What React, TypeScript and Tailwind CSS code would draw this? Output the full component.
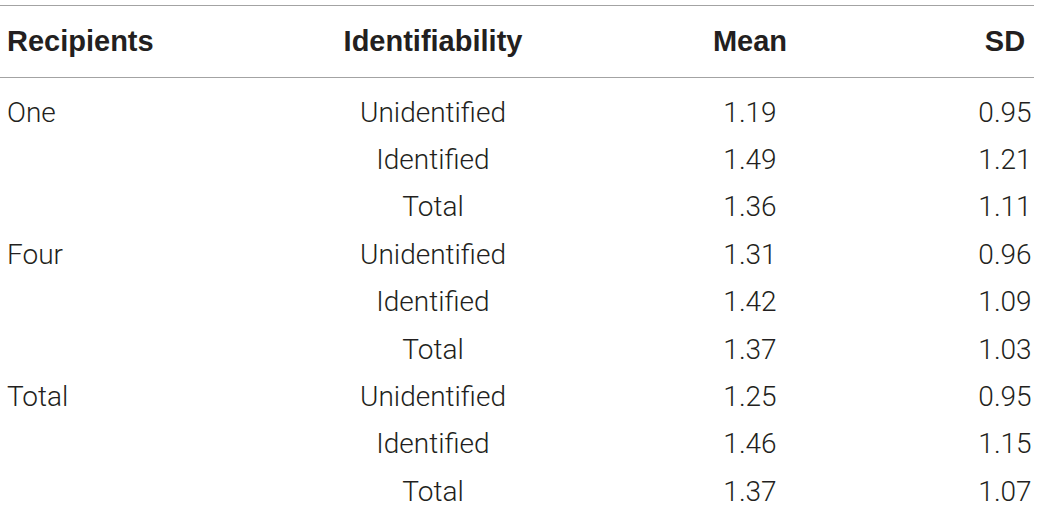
const ROWS = [
  { group: 'One', ident: 'Unidentified', mean: '1.19', sd: '0.95' },
  { group: '', ident: 'Identified', mean: '1.49', sd: '1.21' },
  { group: '', ident: 'Total', mean: '1.36', sd: '1.11' },
  { group: 'Four', ident: 'Unidentified', mean: '1.31', sd: '0.96' },
  { group: '', ident: 'Identified', mean: '1.42', sd: '1.09' },
  { group: '', ident: 'Total', mean: '1.37', sd: '1.03' },
  { group: 'Total', ident: 'Unidentified', mean: '1.25', sd: '0.95' },
  { group: '', ident: 'Identified', mean: '1.46', sd: '1.15' },
  { group: '', ident: 'Total', mean: '1.37', sd: '1.07' },
]

const COLS = 'grid grid-cols-[280px_306px_328px_120px]'

export default function App() {
  return (
    <div className="h-[507px] w-[1040px] overflow-hidden bg-white pt-[5px] text-[#231f20]">
      <div className="w-[1034px] border-t border-[#a3a3a3]">
        <div
          className={`${COLS} h-[72px] items-center border-b border-[#a3a3a3] text-[29px] font-bold`}
          style={{ fontFamily: '"Liberation Sans", Arial, sans-serif' }}
        >
          <div className="pl-[7px]">Recipients</div>
          <div className="text-center">Identifiability</div>
          <div className="text-center">Mean</div>
          <div className="pl-[62px] text-center">SD</div>
        </div>

        <div className="pt-[11px] text-[28px] font-light" style={{ fontFamily: 'Roboto, "Liberation Sans", sans-serif' }}>
          {ROWS.map((row, i) => (
            <div key={i} className={`${COLS} h-[47.375px] items-center`}>
              <div className="pl-[7px]">{row.group}</div>
              <div className="text-center">{row.ident}</div>
              <div className="text-center">{row.mean}</div>
              <div className="pl-[62px] text-center">{row.sd}</div>
            </div>
          ))}
        </div>
      </div>
    </div>
  )
}
